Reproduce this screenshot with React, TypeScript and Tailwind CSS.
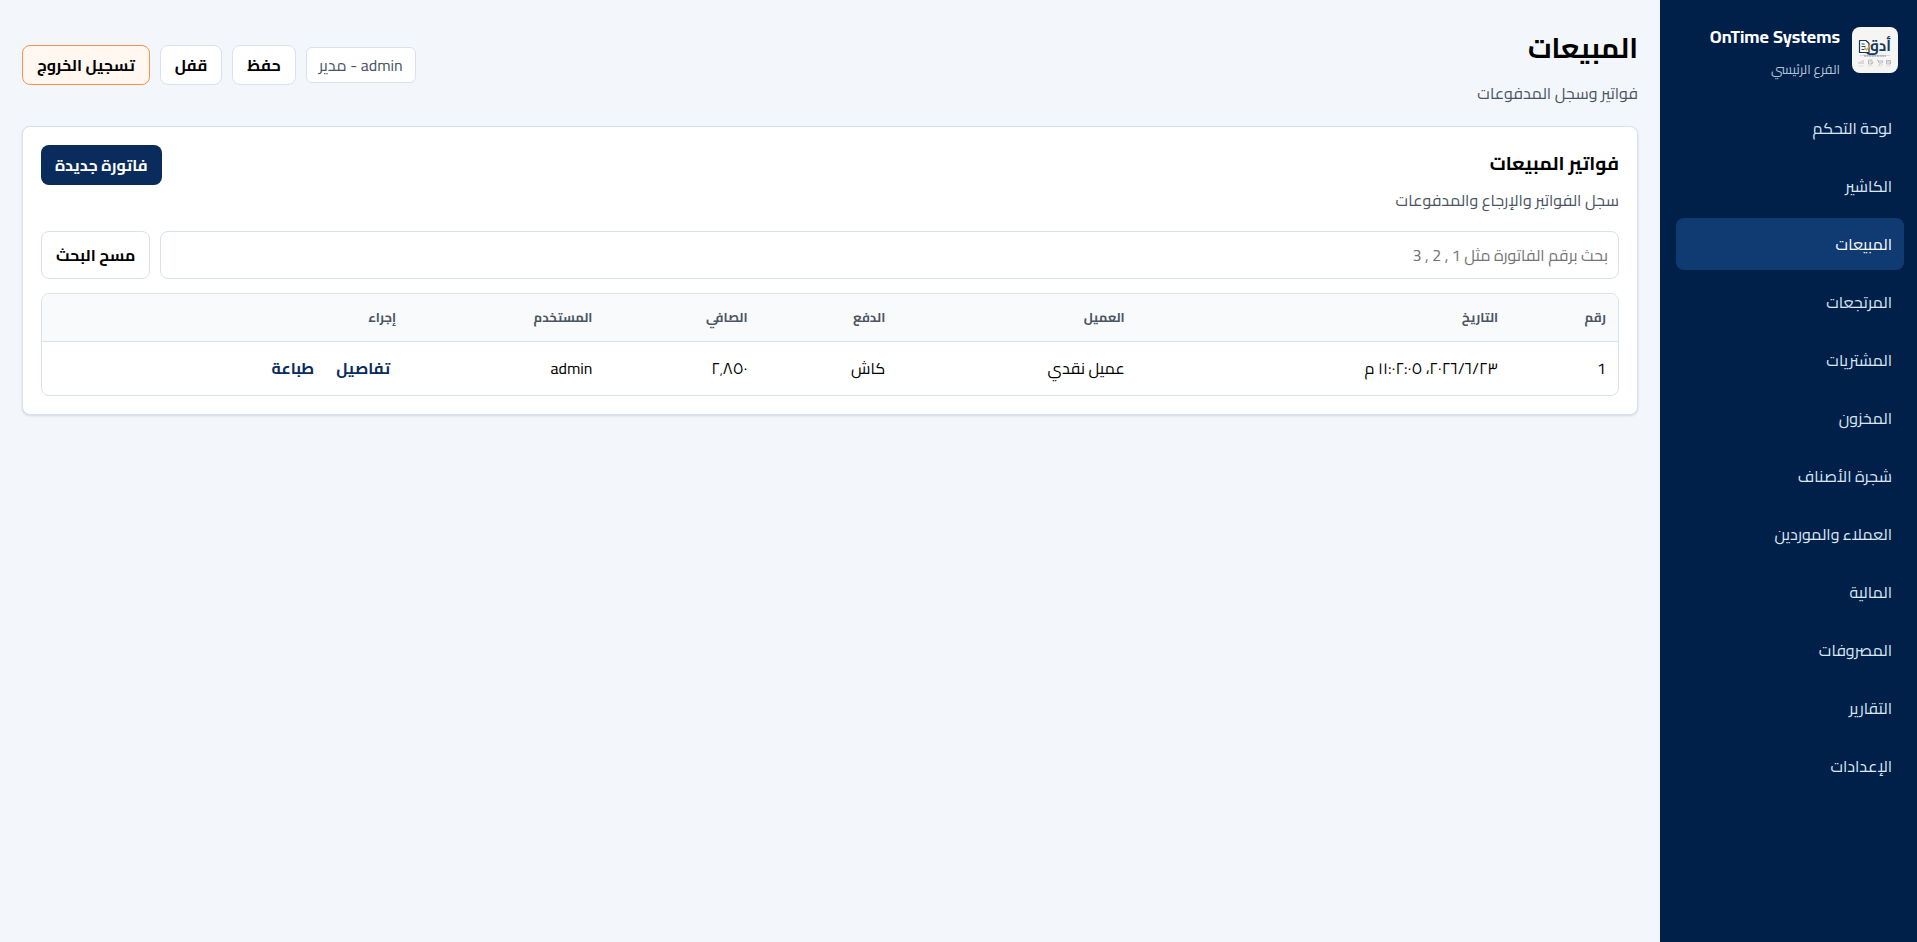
import { useState } from 'react';

const navItems = [
  'لوحة التحكم',
  'الكاشير',
  'المبيعات',
  'المرتجعات',
  'المشتريات',
  'المخزون',
  'شجرة الأصناف',
  'العملاء والموردين',
  'المالية',
  'المصروفات',
  'التقارير',
  'الإعدادات',
];

const columns = ['رقم', 'التاريخ', 'العميل', 'الدفع', 'الصافي', 'المستخدم', 'إجراء'];

const invoices = [
  {
    id: 1,
    date: '٢٣\u200f/٦\u200f/٢٠٢٦، ١١:٠٢:٠٥ م',
    customer: 'عميل نقدي',
    payment: 'كاش',
    net: '٢٬٨٥٠',
    user: 'admin',
  },
];

const buttonBase = 'cursor-pointer rounded-lg px-3.5 text-base font-bold leading-6';

function Logo() {
  return (
    <svg viewBox="0 0 46 46" className="size-[46px] shrink-0 rounded-lg" role="img" aria-label="أدق">
      <rect width="46" height="46" fill="#f5f5f4" />
      <text x="39" y="24" fontSize="15" fontWeight="700" fill="#17395c" direction="rtl" textAnchor="start">
        أدق
      </text>
      <path d="M7.500 13.500h6.500l3 3v9h-9.500z" fill="#fafafa" stroke="#17395c" strokeWidth="1.2" strokeLinejoin="round" />
      <path d="M9.500 17h3M9.500 19.500h4M9.500 22.500h3" stroke="#17395c" strokeWidth="0.900" />
      <path d="M12.500 20.500l2 2.500 4-5" fill="none" stroke="#d9a441" strokeWidth="1.400" />
      <path d="M8 28.500h30" stroke="#b9bfc6" strokeWidth="0.500" />
      <path d="M12 29h22" stroke="#6c7885" strokeWidth="0.800" strokeDasharray="2 0.600" />
      <g fill="none" stroke="#a9afb6" strokeWidth="0.800">
        <path d="M7 37v-2M9 37v-3M11 37v-4" />
        <path d="M16.500 33h3.500v4h-3.500zM17.500 35h1.500" />
        <path d="M25 33h1l1 3h3l1-2h-4" />
        <path d="M34.500 33.500h4v3.500h-4zM34.500 35h4" />
      </g>
      <path d="M19 36l1 1 1.500-2M27 37.500h1M29.500 37.500h1M37 36.500h2" stroke="#d9b878" strokeWidth="0.800" fill="none" />
      <path d="M6.500 39h5M15.500 39h5M25 39h5M34 39h5" stroke="#cdd1d5" strokeWidth="0.600" />
    </svg>
  );
}

export default function App() {
  const [active, setActive] = useState('المبيعات');
  const [query, setQuery] = useState('');

  return (
    <div
      dir="rtl"
      className="flex min-h-screen bg-[#f3f7fc] text-base text-black [font-family:Cairo,'Open_Sans','DejaVu_Sans',sans-serif]"
    >
      <aside className="w-[257px] shrink-0 bg-[#00204a] py-5 ps-[13px] pe-4">
        <div className="flex items-start gap-3 px-1.5 pb-[18px]">
          <div className="pt-[7px]">
            <Logo />
          </div>
          <div>
            <div className="text-lg font-bold leading-[34px] text-white">OnTime Systems</div>
            <div className="text-[13px] leading-[30px] text-[#b3c2d6]">الفرع الرئيسي</div>
          </div>
        </div>
        <nav className="flex flex-col gap-1.5">
          {navItems.map((item) => (
            <button
              key={item}
              type="button"
              onClick={() => setActive(item)}
              aria-current={item === active ? 'page' : undefined}
              className={
                item === active
                  ? 'h-[52px] cursor-pointer rounded-lg bg-[#0f3a72] px-3 text-start text-base text-white'
                  : 'h-[52px] cursor-pointer rounded-lg px-3 text-start text-base text-[#dbe6f5]'
              }
            >
              {item}
            </button>
          ))}
        </nav>
      </aside>

      <main className="min-w-0 flex-1 p-[22px]">
        <header className="flex items-center justify-between pb-[18px]">
          <div>
            <h1 className="text-[28px] font-bold leading-[52px]">المبيعات</h1>
            <p className="mt-1 text-base leading-[30px] text-[#4b5563]">فواتير وسجل المدفوعات</p>
          </div>
          <div className="flex items-center gap-2.5">
            <span className="flex h-9 items-center rounded-md border border-[#d8e1ee] bg-white px-3 text-base text-[#4b5563]">
              admin - مدير
            </span>
            <button type="button" className={`${buttonBase} h-10 border border-[#d8e1ee] bg-white`}>حفظ</button>
            <button type="button" className={`${buttonBase} h-10 border border-[#d8e1ee] bg-white`}>قفل</button>
            <button type="button" className={`${buttonBase} h-10 border border-[#fb8f50] bg-[#fff7f0]`}>تسجيل الخروج</button>
          </div>
        </header>

        <section className="rounded-lg border border-[#d8e1ee] bg-white p-[18px] shadow-sm">
          <div className="flex items-start justify-between pb-3">
            <div>
              <h2 className="text-[19px] font-bold leading-9">فواتير المبيعات</h2>
              <p className="text-base leading-[38px] text-[#4b5563]">سجل الفواتير والإرجاع والمدفوعات</p>
            </div>
            <button type="button" className={`${buttonBase} h-10 bg-[#0a2c5c] text-white`}>فاتورة جديدة</button>
          </div>

          <div className="flex gap-2.5 pb-3.5">
            <input
              type="text"
              aria-label="بحث برقم الفاتورة"
              value={query}
              onChange={(e) => setQuery(e.target.value)}
              placeholder="بحث برقم الفاتورة مثل 1 , 2 , 3"
              className="h-12 min-w-0 flex-1 rounded-lg border border-[#d8e1ee] bg-white px-2.5 text-base placeholder:text-[#757575]"
            />
            <button type="button" onClick={() => setQuery('')} className={`${buttonBase} h-12 border border-[#d8e1ee] bg-white`}>
              مسح البحث
            </button>
          </div>

          <div className="overflow-hidden rounded-lg border border-[#d8e1ee]">
            <table className="w-full border-collapse">
              <thead>
                <tr className="h-[47px] border-b border-[#d8e1ee] bg-[#f8fafc]">
                  {columns.map((label) => (
                    <th key={label} scope="col" className="px-3 text-start text-[13px] font-bold text-[#4b5563]">
                      {label}
                    </th>
                  ))}
                </tr>
              </thead>
              <tbody>
                {invoices.map((row) => (
                  <tr key={row.id} className="h-[54px] text-base">
                    <td className="px-3">{row.id}</td>
                    <td className="px-3">{row.date}</td>
                    <td className="px-3">{row.customer}</td>
                    <td className="px-3">{row.payment}</td>
                    <td className="px-3">{row.net}</td>
                    <td className="px-3">{row.user}</td>
                    <td className="px-3">
                      <div className="flex gap-2.5">
                        <button type="button" className="cursor-pointer px-1.5 font-bold text-[#0a2c5c]">تفاصيل</button>
                        <button type="button" className="cursor-pointer px-1.5 font-bold text-[#0a2c5c]">طباعة</button>
                      </div>
                    </td>
                  </tr>
                ))}
              </tbody>
            </table>
          </div>
        </section>
      </main>
    </div>
  );
}
